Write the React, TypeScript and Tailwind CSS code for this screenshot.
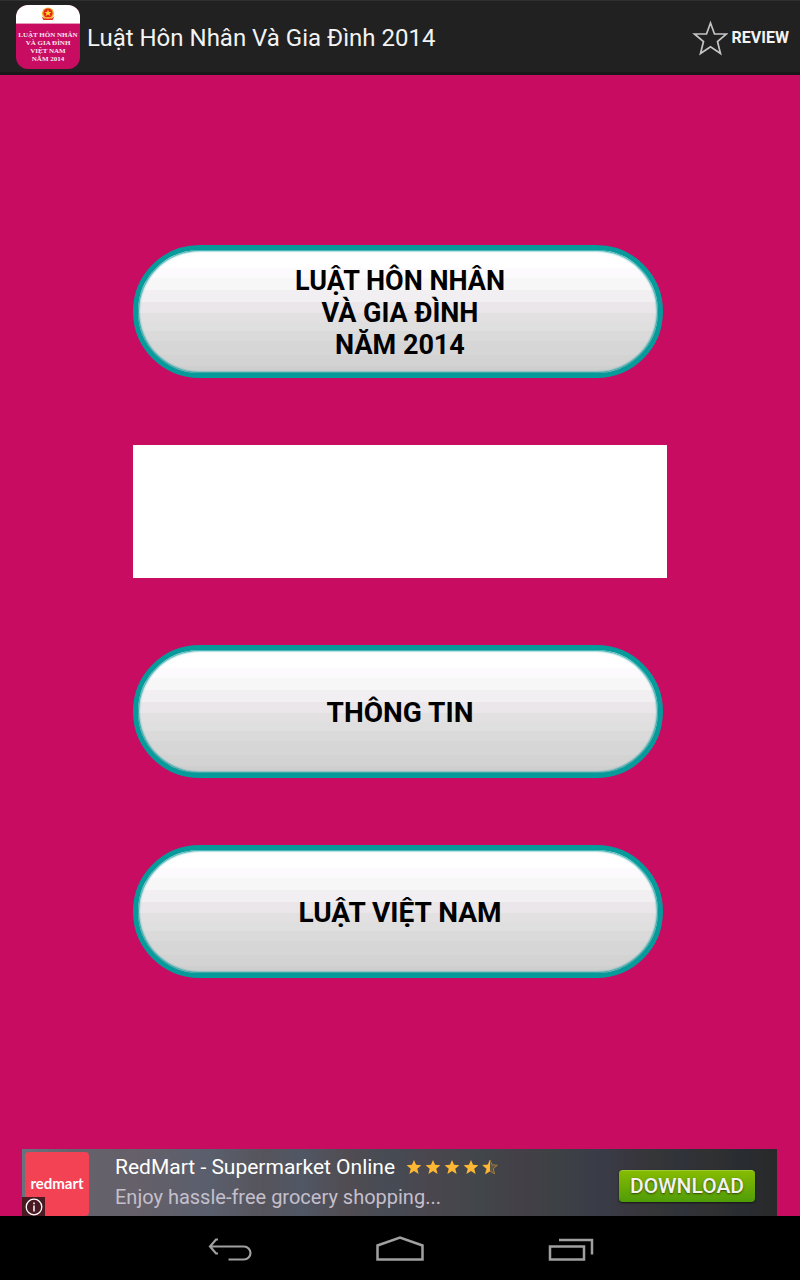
import React from "react";

const STAR = "M12 0.5 15.3 8.5 24 9.200 17.300 14.800 19.500 23.200 12 18.700 4.500 23.200 6.700 14.800 0 9.200 8.700 8.500Z";

function AppIcon() {
  return (
    <div className="flex size-16 shrink-0 flex-col overflow-hidden rounded-xl bg-[#c70c62]">
      <div className="flex h-[19px] shrink-0 items-center justify-center border-b border-[#e49abb] bg-white">
        <svg viewBox="0 0 14 14" className="size-[14px]" aria-hidden="true">
          <circle cx="7" cy="6.500" r="6" fill="#f0b52c" />
          <circle cx="7" cy="6" r="4.600" fill="#e6261c" />
          <path d="M7 2.500 8 5h2.600L8.500 6.500l.8 2.500L7 7.500 4.700 9l.8-2.500L3.400 5H6Z" fill="#ffd42a" />
          <path d="M0.500 9.500 3.500 11.500h7L13.500 9.500 11.500 13H2.500Z" fill="#e6261c" />
          <path d="M5.500 10h3v1.500h-3z" fill="#f0b52c" />
        </svg>
      </div>
      <div className="mt-[7px] text-center font-['Liberation_Serif',serif] text-[7px] leading-2 font-bold whitespace-nowrap text-[#fbe6ef]">
        LUẬT HÔN NHÂN
        <br />
        VÀ GIA ĐÌNH
        <br />
        VIỆT NAM
        <br />
        NĂM 2014
      </div>
    </div>
  );
}

function MenuButton({ children, size = "text-[28px]" }: { children: React.ReactNode; size?: string }) {
  return (
    <button
      type="button"
      className={`mr-1 h-[133px] rounded-full border-5 border-[#069a9b] bg-[linear-gradient(to_bottom,#ffffff_0_17%,#fdfafe_17%_25%,#f8f7f8_25%_34%,#f2eff2_34%_43%,#eae6e9_43%_51%,#e3e0e2_51%_58%,#dfdfdf_58%_65%,#dadada_65%_72%,#d7d6d7_72%_83%,#d3d3d3_83%_91%,#cfcfcf_91%)] bg-origin-border pt-1 pl-1 text-center leading-8 font-bold text-black shadow-[inset_0_0_2px_1px_#069a9b] ${size}`}
    >
      {children}
    </button>
  );
}

function Rating() {
  return (
    <div role="img" aria-label="4.5 / 5" className="flex gap-[3px]">
      {[0, 1, 2, 3, 4].map((i) => (
        <svg key={i} viewBox="-1 -1 26 26" className="size-4" aria-hidden="true">
          {i < 4 ? (
            <path d={STAR} fill="#ffb833" />
          ) : (
            <>
              <path d={STAR} fill="#ffb833" fillOpacity="0.15" stroke="#a8803c" strokeWidth="1.500" />
              <path d="M12 0.500V18.700L4.500 23.200 6.700 14.800 0 9.200 8.700 8.500Z" fill="#ffb833" />
            </>
          )}
        </svg>
      ))}
    </div>
  );
}

export default function App() {
  return (
    <div className="flex min-h-screen flex-col bg-[#c70c62] font-[Roboto,'Noto_Sans',sans-serif]">
      <header className="flex h-[75px] items-center border-t border-b-3 border-t-[#303030] border-b-[#181818] bg-[#212121] pr-[11px] pl-4">
        <AppIcon />
        <h1 className="ml-[7px] flex-1 pt-0.5 text-2xl text-[#f3f3f3]">Luật Hôn Nhân Và Gia Đình 2014</h1>
        <button type="button" className="flex items-center gap-1 pt-0.5 text-base font-bold text-[#f3f3f3]">
          <svg viewBox="0 0 36 36" className="size-9" fill="none" stroke="#c4c4c4" strokeWidth="1.700" aria-hidden="true">
            <path d="M18.500 3 22.500 14H34.500L25.500 21.500 28.500 33.500 18.500 26.800 8.500 33.500 11.500 21.500 2.500 14H14.500Z" />
          </svg>
          REVIEW
        </button>
      </header>

      <main className="mx-auto flex w-2/3 flex-1 flex-col justify-center gap-[67px] pb-0.5">
        <MenuButton size="text-[27px]">
          LUẬT HÔN NHÂN
          <br />
          VÀ GIA ĐÌNH
          <br />
          NĂM 2014
        </MenuButton>
        <div className="h-[133px] bg-white" />
        <MenuButton>THÔNG TIN</MenuButton>
        <MenuButton>LUẬT VIỆT NAM</MenuButton>
      </main>

      <aside className="mr-[23px] ml-[22px] flex h-[67px] items-center bg-[linear-gradient(to_right,#69737d_0%,#64626c_7%,#656069_15%,#5a5f6d_25%,#56545b_32%,#505765_37%,#514c52_43%,#454b54_49%,#4b464e_54%,#41464a_61%,#443f48_66%,#3e4144_70%,#393c47_77%,#38363e_81%,#343638_84%,#2f3239_88%,#313131_91%,#292d32_95%,#292929_100%)] pr-[22px] pl-[3px]">
        <div className="relative mt-[3px] flex size-16 shrink-0 items-center justify-center rounded-sm bg-[#f24254] pb-0.5 text-white">
          <span className="font-[Lato,sans-serif] text-[15px] font-bold">redmart</span>
          <span className="absolute bottom-0 -left-[3px] flex h-[19px] w-[23px] items-center justify-center bg-[#4a1a22]">
            <svg viewBox="0 0 18 18" className="size-[18px]" fill="none" stroke="#fff" aria-hidden="true">
              <circle cx="9" cy="9" r="7.800" strokeWidth="1.300" />
              <path d="M9 7.500v6M9 4.500v1.700" strokeWidth="1.500" />
            </svg>
          </span>
        </div>
        <div className="ml-[26px] flex-1 pb-0.5">
          <div className="flex items-center gap-[11px]">
            <a href="#redmart" className="text-[21px] leading-[30px] text-white">RedMart - Supermarket Online</a>
            <Rating />
          </div>
          <p className="text-xl leading-[30px] text-[#c5bfcc]">Enjoy hassle-free grocery shopping...</p>
        </div>
        <button
          type="button"
          className="mt-1.5 h-8 w-[136px] rounded-sm border-t border-[#9bcb2c] bg-linear-to-b from-[#86bb00] to-[#4f9c08] text-[21px] leading-none font-medium text-[#f2f2f2] shadow-[0_1px_2px_#161616] text-shadow-[0_1px_2px_#33440b]"
        >
          DOWNLOAD
        </button>
      </aside>

      <nav className="flex h-16 items-center justify-center gap-[123px] bg-black">
        <button type="button" aria-label="Back">
          <svg viewBox="0 0 48 32" className="h-8 w-12" fill="none" stroke="#a0a0a0" strokeWidth="2.200" aria-hidden="true">
            <path d="M13 7.500H11L5 14.500 11 21.500H13M5.500 14.500H39a6.500 6.500 0 0 1 0 13H23.500" />
          </svg>
        </button>
        <button type="button" aria-label="Home">
          <svg viewBox="0 0 48 32" className="h-8 w-12" fill="none" stroke="#a0a0a0" strokeWidth="2.500" aria-hidden="true">
            <path d="M1.500 27.500V13.500L24 5.500 46.500 13.500V27.500Z" />
          </svg>
        </button>
        <button type="button" aria-label="Recent apps">
          <svg viewBox="0 0 48 32" className="h-8 w-12" fill="none" stroke="#a0a0a0" strokeWidth="2.500" aria-hidden="true">
            <path d="M3 14.500H37V27.500H3ZM12 8H45V22.500" />
          </svg>
        </button>
      </nav>
    </div>
  );
}
